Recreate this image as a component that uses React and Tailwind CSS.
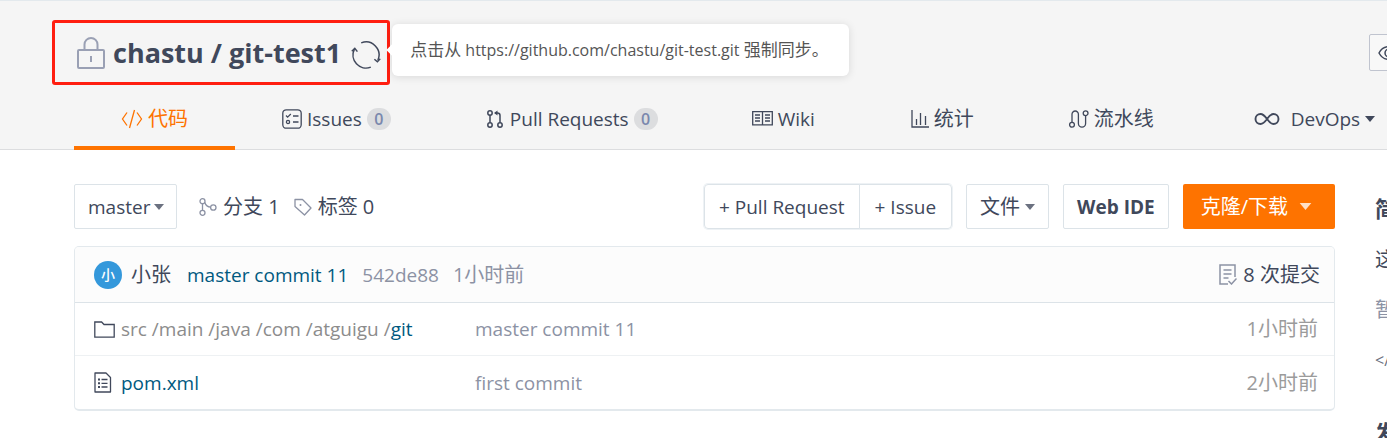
import React, { useState } from 'react';
import clsx from 'clsx';

const Svg = ({ className, viewBox, strokeWidth = 1.3, children }) => (
  <svg
    className={clsx('shrink-0', className)}
    viewBox={viewBox}
    fill="none"
    stroke="currentColor"
    strokeWidth={strokeWidth}
    aria-hidden="true"
  >
    {children}
  </svg>
);

const LockIcon = () => (
  <Svg className="w-7 h-8 text-[#9aa0b4]" viewBox="0 0 28 32" strokeWidth={2}>
    <rect x="1" y="13" width="26" height="18" rx="1" />
    <path d="M7.5 13V7.5a6.5 6.5 0 0 1 13 0V13" />
    <path d="M14 19v6" />
  </Svg>
);

const SyncIcon = () => (
  <Svg className="w-[30px] h-[30px]" viewBox="0 0 30 30" strokeWidth={1.5}>
    <path d="M10.2 2.9A13 13 0 0 1 26.900 20.200" />
    <path d="M19.800 27.100A13 13 0 0 1 3.400 9.200" />
    <path d="M.8 11.200L3.800 8.400l2.600 3.200M23.400 19.200l3 2.600 2.800-3" />
  </Svg>
);

const CodeIcon = () => (
  <Svg className="w-[22px] h-5" viewBox="0 0 22 20">
    <path d="M6 3.5L1.5 10 6 16.5M16 3.5l4.5 6.5-4.5 6.5M13.5 1l-5 18" />
  </Svg>
);

const IssuesIcon = () => (
  <Svg className="w-5 h-5" viewBox="0 0 20 20">
    <rect x=".8" y=".8" width="18.4" height="18.4" rx="3.5" />
    <path d="M4 6.5l1.6 1.6L8.8 5M11 7h5.5M11 13h5.5" />
    <circle cx="6" cy="13" r="1.6" />
  </Svg>
);

const PullIcon = () => (
  <Svg className="w-5 h-[18px]" viewBox="0 0 20 18" strokeWidth={1.5}>
    <circle cx="5" cy="3" r="2.2" />
    <circle cx="5" cy="15" r="2.2" />
    <circle cx="15" cy="15" r="2.2" />
    <path d="M5 5.2v7.6M15 12.8V5.5q0-2.5-2.5-2.5H10" />
    <path d="M12.5.4v5.2L9 3z" fill="currentColor" stroke="none" />
  </Svg>
);

const WikiIcon = () => (
  <Svg className="w-[21px] h-[15px]" viewBox="0 0 21 15">
    <path d="M.7.7h19.600v13.2H.7zM10.500.7v13.2" />
    <path d="M3 4h5M3 7h5M3 10h5M13 4h5M13 7h5M13 10h5" />
  </Svg>
);

const ChartIcon = () => (
  <Svg className="w-5 h-[18px]" viewBox="0 0 20 18">
    <path d="M3 0v17h17M7.500 15V9M11.500 15V3M16.500 15V6" />
  </Svg>
);

const PipelineIcon = () => (
  <Svg className="w-[21px] h-[18px]" viewBox="0 0 21 18">
    <circle cx="4" cy="14.8" r="2.4" />
    <circle cx="17.600" cy="3.2" r="2.4" />
    <path d="M4 12.4V4.2a3.2 3.2 0 0 1 6.4 0v9.4a3.6 3.6 0 0 0 7.2 0v-8" />
  </Svg>
);

const DevOpsIcon = () => (
  <Svg className="w-[26px] h-3 mx-[6px]" viewBox="0 0 26 12" strokeWidth={1.9}>
    <path d="M13 6C10.500 2.500 9 1 6.500 1a5 5 0 0 0 0 10C9 11 10.500 9.500 13 6s4-5 6.500-5a5 5 0 0 1 0 10C17 11 15.500 9.500 13 6z" />
  </Svg>
);

const EyeIcon = () => (
  <Svg className="w-[22px] h-4" viewBox="0 0 22 16" strokeWidth={1.5}>
    <path d="M1 8c4.500-8.500 15.500-8.500 20 0-4.500 8.500-15.500 8.500-20 0z" />
    <circle cx="11" cy="8" r="4" />
  </Svg>
);

const BranchIcon = () => (
  <Svg className="w-[18px] h-[18px] text-[#8c92a4]" viewBox="0 0 18 18">
    <circle cx="3.500" cy="3.200" r="2.500" />
    <circle cx="3.500" cy="14.800" r="2.500" />
    <circle cx="14.300" cy="9.500" r="2.700" />
    <path d="M3.500 5.700v6.600M5.800 4.500c1 3 3 4.500 5.800 4.600" />
  </Svg>
);

const TagIcon = () => (
  <Svg className="w-[18px] h-[18px] text-[#8c92a4]" viewBox="0 0 18 18">
    <path d="M1 1.500h7.500L17 10l-6.500 7L1 8.500z" strokeLinejoin="round" />
    <circle cx="6.500" cy="7" r="1" fill="currentColor" stroke="none" />
  </Svg>
);

const CommitsIcon = () => (
  <Svg className="w-[18px] h-[21px] text-[#8c92a4]" viewBox="0 0 18 21" strokeWidth={1.5}>
    <path d="M16 13V1H1v19h8M4.500 6h8M4.500 10h8M4.500 14h5M9.500 17l3 3 5-5.500" />
  </Svg>
);

const FolderIcon = () => (
  <Svg className="w-[21px] h-[17px] text-[#40485b]" viewBox="0 0 21 17">
    <path d="M.8 1h6.800l2.400 2.500h10.200v12.700H.8z" />
  </Svg>
);

const FileIcon = () => (
  <Svg className="w-[21px] h-[21px] text-[#40485b]" viewBox="0 0 21 21">
    <path d="M1 1h11l4.500 4.500V20H1z" strokeLinejoin="round" />
    <path d="M7.500 7.500h6M7.500 11.300h6M7.500 15h6" />
    <path d="M4 7.500h2M4 11.300h2M4 15h2" strokeWidth={2} />
  </Svg>
);

const Caret = ({ className }) => (
  <svg className={clsx('shrink-0', className)} viewBox="0 0 10 6" fill="currentColor" aria-hidden="true">
    <path d="M0 0h10L5 6z" />
  </svg>
);

const tabs = [
  { id: 'code', label: '代码', icon: CodeIcon, cjk: true },
  { id: 'issues', label: 'Issues', icon: IssuesIcon, count: 0 },
  { id: 'pulls', label: 'Pull Requests', icon: PullIcon, count: 0 },
  { id: 'wiki', label: 'Wiki', icon: WikiIcon },
  { id: 'stats', label: '统计', icon: ChartIcon, cjk: true },
  { id: 'pipeline', label: '流水线', icon: PipelineIcon, cjk: true },
  { id: 'devops', label: 'DevOps', icon: DevOpsIcon, menu: true },
];

const files = [
  { dirs: ['src', '/main', '/java', '/com', '/atguigu', '/'], name: 'git', message: 'master commit 11', time: '1小时前', icon: FolderIcon },
  { dirs: [], name: 'pom.xml', message: 'first commit', time: '2小时前', icon: FileIcon },
];

const Header = ({ active, onSelect }) => (
  <header className="border-t border-b border-t-[#e3e9ed] border-b-[#dcdddf] bg-[#f5f5f5]">
    <div className="flex items-center pl-[52px] pt-[19px]">
      <div className="relative flex h-[65px] shrink-0 items-center rounded-[3px] border-3 border-[#ff1e10] pl-[22px] pr-[6px]">
        <LockIcon />
        <h1 className="ml-2 text-[27px] leading-8 font-bold">
          <a href="#owner">chastu</a> / <a href="#repo">git-test1</a>
        </h1>
        <button type="button" aria-label="强制同步" className="ml-[10px] pt-1">
          <SyncIcon />
        </button>
        <div
          role="tooltip"
          className="absolute left-full top-px ml-[5px] flex h-[52px] items-center whitespace-pre rounded-md bg-white pl-[18px] pr-5 text-[17px] text-[#555] shadow-[0_1px_8px_rgba(0,0,0,0.12)] before:absolute before:-left-1 before:top-[22px] before:size-2 before:rotate-45 before:bg-white"
        >
          点击从<span className="text-base"> https://github.com/chastu/git-test.git </span>强制同步。
        </div>
      </div>
      <button
        type="button"
        aria-label="Watch"
        className="-mr-5 ml-auto flex h-[37px] w-[38px] shrink-0 items-center rounded-xs border border-[#c0c4cf] bg-[#f8f8f8] pl-2"
      >
        <EyeIcon />
      </button>
    </div>
    <nav className="-mb-px flex h-[65px] whitespace-nowrap pl-[74px]">
      {tabs.map(({ id, label, icon: Icon, count, menu, cjk }) => (
        <a
          key={id}
          href={`#${id}`}
          onClick={() => onSelect(id)}
          className={clsx(
            'flex shrink-0 items-center gap-[5px] border-b-4 px-[47px] pt-[6px]',
            active === id ? 'border-[#fe7300] text-[#fe7300]' : 'border-transparent'
          )}
        >
          <Icon />
          <span className={clsx(cjk && 'text-xl')}>{label}</span>
          {count !== undefined && (
            <span className="flex h-[22px] w-6 items-center justify-center rounded-full bg-[#dcdddf] text-base font-semibold text-[#7a88ad]">
              {count}
            </span>
          )}
          {menu && <Caret className="h-[6px] w-[10px]" />}
        </a>
      ))}
    </nav>
  </header>
);

const buttonStyle = 'flex h-[45px] items-center border border-[#dce3e8] bg-white';

const Toolbar = () => (
  <div className="flex items-center">
    <div className="relative flex items-center">
      <select
        aria-label="分支"
        className="h-[45px] appearance-none rounded-xs border border-[#dce3e8] bg-white pl-[13px] pr-[25px]"
      >
        <option>master</option>
      </select>
      <Caret className="pointer-events-none absolute right-[13px] h-[6px] w-[10px] text-[#6b7180]" />
    </div>
    <a href="#branches" className="ml-[22px] flex items-center gap-[6px] text-xl">
      <BranchIcon />
      分支 1
    </a>
    <a href="#tags" className="ml-[14px] flex items-center gap-[6px] text-xl">
      <TagIcon />
      标签 0
    </a>
    <div className="ml-auto flex gap-[14px]">
      <div className="flex rounded-sm shadow-[0_0_0_1px_#eef2f5]">
        <button type="button" className={clsx(buttonStyle, 'rounded-l-sm px-[14px]')}>
          + Pull Request
        </button>
        <button type="button" className={clsx(buttonStyle, '-ml-px rounded-r-sm px-[15px]')}>
          + Issue
        </button>
      </div>
      <button type="button" className={clsx(buttonStyle, 'gap-[5px] rounded-xs px-[13px] text-xl')}>
        文件
        <Caret className="h-[6px] w-[10px] text-[#6b7180]" />
      </button>
      <button type="button" className={clsx(buttonStyle, 'rounded-xs px-[13px] font-bold')}>
        Web IDE
      </button>
      <button
        type="button"
        className="flex h-[45px] items-center gap-[11px] rounded-xs bg-[#fe7300] pl-[18px] pr-[23px] text-xl text-white"
      >
        克隆/下载
        <Caret className="h-[7px] w-[13px] text-[#ffe0c7]" />
      </button>
    </div>
  </div>
);

const FileList = () => (
  <section className="mt-[17px] overflow-hidden rounded-[5px] border border-b-2 border-[#e3e9ed]">
    <div className="flex h-14 items-center border-b border-[#dce3e8] bg-[#fcfcfc] pl-[19px] pr-[14px]">
      <span className="flex size-7 items-center justify-center rounded-full bg-[#3498db] text-sm font-medium text-white">小</span>
      <a href="#author" className="ml-[9px] text-xl">小张</a>
      <a href="#commit" className="ml-4 text-[#005980]">master commit 11</a>
      <a href="#sha" className="ml-[14px] text-[#8c92a4]">542de88</a>
      <span className="ml-[14px] text-xl text-[#8c92a4]">1小时前</span>
      <a href="#commits" className="ml-auto flex items-center gap-[6px] text-xl">
        <CommitsIcon />
        8 次提交
      </a>
    </div>
    <table className="w-full border-separate border-spacing-0">
      <tbody>
        {files.map(({ dirs, name, message, time, icon: Icon }) => (
          <tr key={name} className="h-[53px] *:border-b *:border-[#eef1f3] last:*:border-b-0">
            <td className="w-[400px] pl-[19px]">
              <a href={`#${name}`} className="flex items-center gap-[6px]">
                <Icon />
                <span className="text-[#005980]">
                  <span className="text-[#8c8c8c]">{dirs.join(' ')}</span>
                  {name}
                </span>
              </a>
            </td>
            <td className="text-[#8c92a4]">{message}</td>
            <td className="pr-4 text-right text-xl text-[#9b9b9b]">{time}</td>
          </tr>
        ))}
      </tbody>
    </table>
  </section>
);

const Sidebar = () => (
  <aside className="w-3 shrink-0 overflow-hidden whitespace-nowrap">
    <h2 className="mt-2 text-[22px] leading-8 font-bold">简</h2>
    <p className="mt-5 text-xl leading-8">这</p>
    <p className="mt-[18px] text-xl leading-8 text-[#8c92a4]">暂</p>
    <p className="mt-[18px] text-base leading-8 text-[#6b7180]">&lt;/</p>
    <h2 className="mt-10 text-[22px] leading-8 font-bold">发</h2>
  </aside>
);

export default function App() {
  const [active, setActive] = useState('code');

  return (
    <div className="overflow-hidden bg-white font-['Open_Sans','Noto_Sans_CJK_SC',sans-serif] text-[19px] leading-7 text-[#40485b]">
      <Header active={active} onSelect={setActive} />
      <div className="flex gap-10 pl-[74px] pt-[34px]">
        <main className="min-w-0 flex-1">
          <Toolbar />
          <FileList />
        </main>
        <Sidebar />
      </div>
    </div>
  );
}
